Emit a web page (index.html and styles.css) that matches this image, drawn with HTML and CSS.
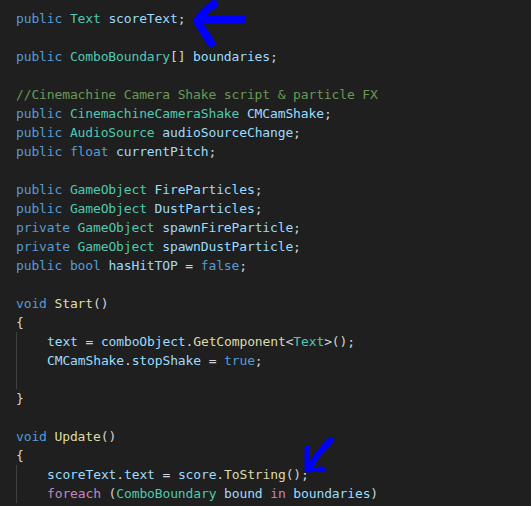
FILE: index.html
```html
<!DOCTYPE html>
<html>
<head>
<meta charset="utf-8">
<link rel="stylesheet" href="styles.css">
</head>
<body>
<div class="editor">
<div class="line"><span class="kw">public</span> <span class="ty">Text</span> <span class="va">scoreText</span>;</div>
<div class="line"> </div>
<div class="line"><span class="kw">public</span> <span class="ty">ComboBoundary</span>[] <span class="va">boundaries</span>;</div>
<div class="line"> </div>
<div class="line"><span class="cm">//Cinemachine Camera Shake script &amp; particle FX</span></div>
<div class="line"><span class="kw">public</span> <span class="ty">CinemachineCameraShake</span> <span class="va">CMCamShake</span>;</div>
<div class="line"><span class="kw">public</span> <span class="ty">AudioSource</span> <span class="va">audioSourceChange</span>;</div>
<div class="line"><span class="kw">public</span> <span class="kw">float</span> <span class="va">currentPitch</span>;</div>
<div class="line"> </div>
<div class="line"><span class="kw">public</span> <span class="ty">GameObject</span> <span class="va">FireParticles</span>;</div>
<div class="line"><span class="kw">public</span> <span class="ty">GameObject</span> <span class="va">DustParticles</span>;</div>
<div class="line"><span class="kw">private</span> <span class="ty">GameObject</span> <span class="va">spawnFireParticle</span>;</div>
<div class="line"><span class="kw">private</span> <span class="ty">GameObject</span> <span class="va">spawnDustParticle</span>;</div>
<div class="line"><span class="kw">public</span> <span class="kw">bool</span> <span class="va">hasHitTOP</span> = <span class="kw">false</span>;</div>
<div class="line"> </div>
<div class="line"><span class="kw">void</span> <span class="fn">Start</span>()</div>
<div class="line">{</div>
<div class="block">
<div class="line"><span class="va">text</span> = <span class="va">comboObject</span>.<span class="fn">GetComponent</span>&lt;<span class="ty">Text</span>&gt;();</div>
<div class="line"><span class="va">CMCamShake</span>.<span class="va">stopShake</span> = <span class="kw">true</span>;</div>
<div class="line"> </div>
</div>
<div class="line">}</div>
<div class="line"> </div>
<div class="line"><span class="kw">void</span> <span class="fn">Update</span>()</div>
<div class="line">{</div>
<div class="block">
<div class="line"><span class="va">scoreText</span>.<span class="va">text</span> = <span class="va">score</span>.<span class="fn">ToString</span>();</div>
<div class="line"><span class="ck">foreach</span> (<span class="ty">ComboBoundary</span> <span class="va">bound</span> <span class="ck">in</span> <span class="va">boundaries</span>)</div>
</div>
</div>
<svg class="marks" width="531" height="506" viewBox="0 0 531 506">
<g fill="none" stroke="#0000ff" stroke-linecap="round" stroke-linejoin="round">
<path d="M242 19 L203 19" stroke-width="8"/>
<path d="M214 4 Q203 12 197 21 Q204 32 211 43" stroke-width="8"/>
<path d="M331 440 Q318 452 310 467" stroke-width="6"/>
<path d="M307 448 L307 470 L323 469" stroke-width="5"/>
</g>
</svg>
</body>
</html>
```

FILE: styles.css
```css
html, body {
  margin: 0;
  padding: 0;
  background: #1f1f1f;
}
body {
  width: 531px;
  height: 506px;
  overflow: hidden;
  position: relative;
}
.editor {
  padding: 8.5px 0 0 16px;
  font-family: "DejaVu Sans Mono", "Liberation Mono", monospace;
  font-size: 13px;
  letter-spacing: -0.13px;
  line-height: 19px;
  color: #d4d4d4;
}
.line {
  white-space: pre;
  height: 19px;
}
.block {
  border-left: 1px solid #404040;
  padding-left: 30px;
}
.kw { color: #569cd6; }
.ty { color: #4ec9b0; }
.va { color: #9cdcfe; }
.fn { color: #dcdcaa; }
.cm { color: #6a9955; }
.ck { color: #c586c0; }
.marks {
  position: absolute;
  left: 0;
  top: 0;
}
```
